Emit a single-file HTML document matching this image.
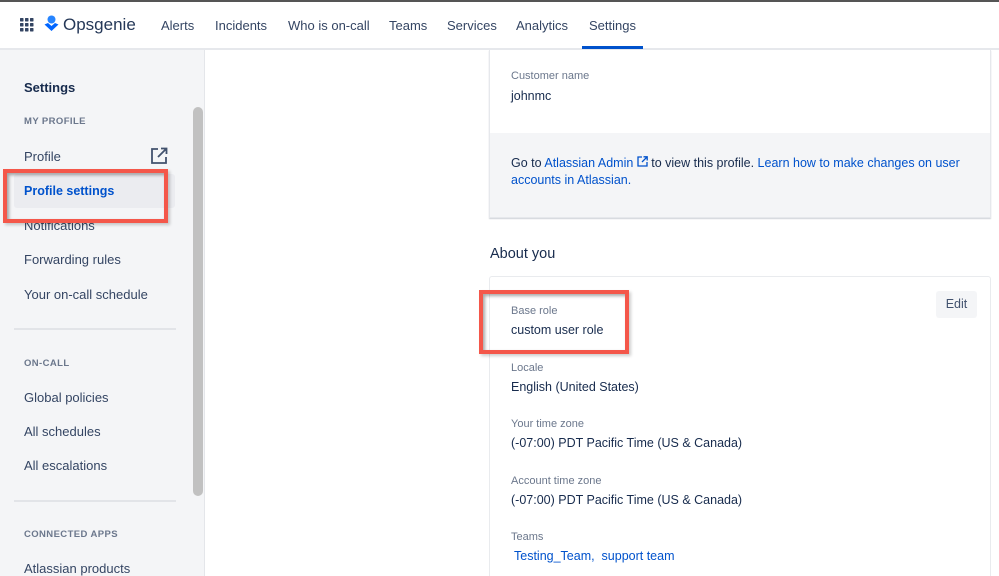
<!DOCTYPE html>
<html><head><meta charset="utf-8"><style>
*{box-sizing:border-box;margin:0;padding:0}
html,body{width:999px;height:576px;overflow:hidden}
body{background:#fff;font-family:"Liberation Sans",Arial,sans-serif;color:#172b4d;position:relative}
.abs{position:absolute}
.top{left:0;top:0;width:999px;height:2px;background:#555}
.nav{left:0;top:2px;width:999px;height:48px;border-bottom:2px solid #e6e8ec;background:#fff}
.nav .it{position:absolute;top:16px;font-size:13px;color:#344563}
.side{left:0;top:50px;width:205px;height:526px;background:#f4f5f7;border-right:1px solid #e4e6ea}
.s{position:absolute;left:24px;font-size:13px;color:#344563}
.h{position:absolute;left:24px;font-size:9.5px;font-weight:bold;color:#6b778c;letter-spacing:.4px}
.sep{position:absolute;left:14px;width:162px;height:2px;background:#e2e4e8}
.lab{position:absolute;left:511px;font-size:11px;color:#6b778c}
.val{position:absolute;left:511px;font-size:12.5px;color:#172b4d}
a{color:#0052cc;text-decoration:none}
.red{position:absolute;border:4px solid #f4574a;box-shadow:inset 2px 2px 3px rgba(0,0,0,.35),2px 2px 3px rgba(0,0,0,.2)}
</style></head><body>
<div class="abs top"></div>
<div class="abs nav">
<svg class="abs" style="left:20px;top:16px" width="14" height="14" viewBox="0 0 14 14" fill="#344563"><rect x="0" y="0" width="3.5" height="3.5" rx=".6"/><rect x="5" y="0" width="3.5" height="3.5" rx=".6"/><rect x="10" y="0" width="3.5" height="3.5" rx=".6"/><rect x="0" y="5" width="3.5" height="3.5" rx=".6"/><rect x="5" y="5" width="3.5" height="3.5" rx=".6"/><rect x="10" y="5" width="3.5" height="3.5" rx=".6"/><rect x="0" y="10" width="3.5" height="3.5" rx=".6"/><rect x="5" y="10" width="3.5" height="3.5" rx=".6"/><rect x="10" y="10" width="3.5" height="3.5" rx=".6"/></svg>
<svg class="abs" style="left:44px;top:13px" width="15" height="18" viewBox="0 0 15 18"><circle cx="7.5" cy="4.5" r="4" fill="#2684ff"/><path d="M0.5 9.5 L7.5 16 L14.5 9.5 L11 8 L7.5 11 L4 8 Z" fill="#0065ff"/></svg>
<div class="abs" style="left:63px;top:13px;font-size:17px;color:#253858">Opsgenie</div>
<div class="it" style="left:161px">Alerts</div>
<div class="it" style="left:215px">Incidents</div>
<div class="it" style="left:288px">Who is on-call</div>
<div class="it" style="left:389px">Teams</div>
<div class="it" style="left:447px">Services</div>
<div class="it" style="left:516px">Analytics</div>
<div class="it" style="left:589px">Settings</div>
<div class="abs" style="left:582px;top:44px;width:61px;height:3px;background:#0052cc"></div>
</div>
<div class="abs side">
<div class="s" style="top:30px;font-weight:bold;color:#172b4d">Settings</div>
<div class="h" style="top:66px">MY PROFILE</div>
<div class="s" style="top:99px">Profile</div>
<svg class="abs" style="left:150px;top:97px" width="18" height="18" viewBox="0 0 18 18" fill="none" stroke="#42526e" stroke-width="1.8"><path d="M8 2H2v14h14v-6"/><path d="M11 1.5h5.5V7M16.5 1.5L8 10"/></svg>
<div class="abs" style="left:14px;top:124px;width:161px;height:34px;background:#ebecf0;border-radius:3px"></div>
<div class="s" style="top:134px;color:#0052cc;font-weight:bold;font-size:12.5px">Profile settings</div>
<div class="s" style="top:168px">Notifications</div>
<div class="s" style="top:202px">Forwarding rules</div>
<div class="s" style="top:237px">Your on-call schedule</div>
<div class="sep" style="top:278px"></div>
<div class="h" style="top:308px">ON-CALL</div>
<div class="s" style="top:340px">Global policies</div>
<div class="s" style="top:374px">All schedules</div>
<div class="s" style="top:408px">All escalations</div>
<div class="sep" style="top:450px"></div>
<div class="h" style="top:479px">CONNECTED APPS</div>
<div class="s" style="top:511px">Atlassian products</div>
<div class="abs" style="left:193px;top:57px;width:10px;height:389px;background:#c1c1c1;border-radius:5px"></div>
</div>
<div class="red" style="left:3px;top:169px;width:165px;height:54px"></div>

<div class="abs" style="left:489px;top:50px;width:502px;height:168px;border:1px solid #e6e8ec;border-top:none;box-shadow:0 1px 1px rgba(9,30,66,.2)">
<div style="position:absolute;left:0;top:83px;width:500px;height:84px;background:#f4f5f7"></div>
</div>
<div class="lab" style="top:70px">Customer name</div>
<div class="val" style="top:89px">johnmc</div>
<div class="abs" style="left:511px;top:155px;font-size:12.5px;line-height:17px;width:460px;color:#172b4d">Go to <a>Atlassian Admin <svg width="11" height="11" viewBox="0 0 11 11" fill="none" stroke="#0052cc" stroke-width="1.3"><path d="M5 1H1v9h9V6"/><path d="M6.5 .8h3.7v3.7M10.2 .8L5 6"/></svg></a> to view this profile. <a>Learn how to make changes on user accounts in Atlassian.</a></div>

<div class="abs" style="left:490px;top:246px;font-size:14.5px;color:#172b4d">About you</div>
<div class="abs" style="left:489px;top:276px;width:502px;height:310px;border:1px solid #e9ebee;border-radius:3px"></div>
<div class="abs" style="left:936px;top:291px;width:41px;height:27px;background:#f4f5f7;border-radius:3px;font-size:12.5px;color:#42526e;text-align:center;line-height:27px">Edit</div>
<div class="lab" style="top:305px">Base role</div>
<div class="val" style="top:323px">custom user role</div>
<div class="red" style="left:479px;top:290px;width:150px;height:64px"></div>
<div class="lab" style="top:362px">Locale</div>
<div class="val" style="top:380px">English (United States)</div>
<div class="lab" style="top:418px">Your time zone</div>
<div class="val" style="top:436px">(-07:00) PDT Pacific Time (US &amp; Canada)</div>
<div class="lab" style="top:475px">Account time zone</div>
<div class="val" style="top:493px">(-07:00) PDT Pacific Time (US &amp; Canada)</div>
<div class="lab" style="top:531px">Teams</div>
<div class="val" style="top:549px;left:514px;color:#0052cc">Testing_Team,&nbsp; support team</div>
</body></html>
